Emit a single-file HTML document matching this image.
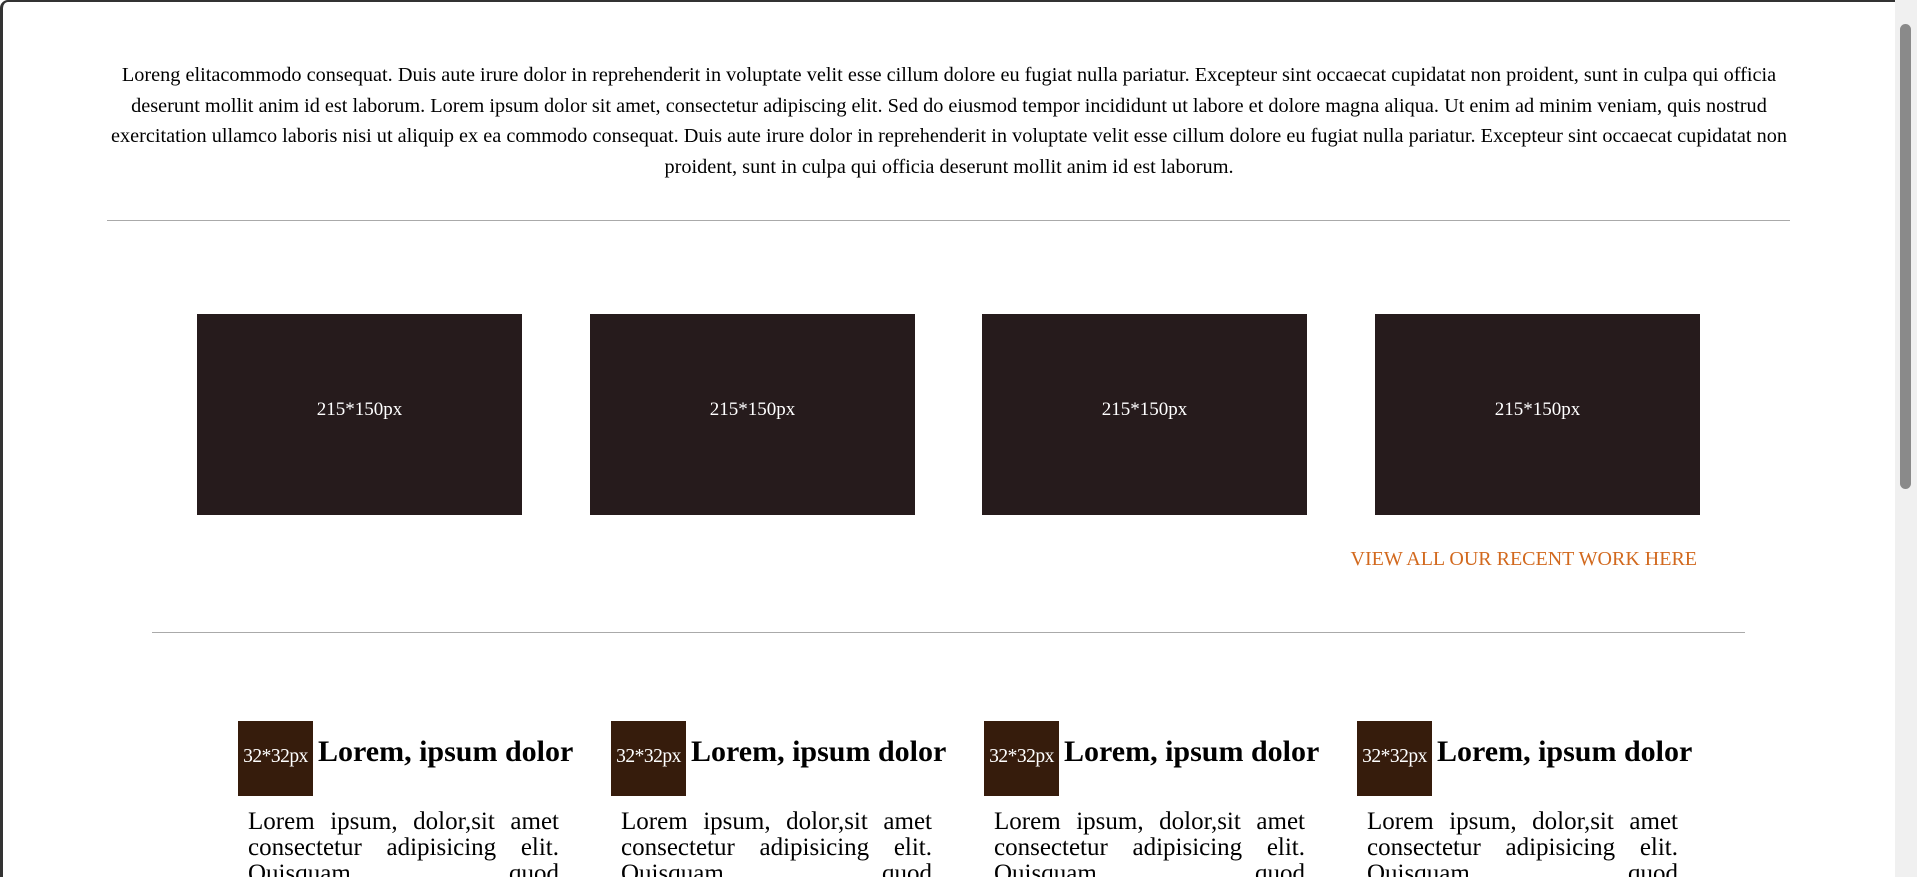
<!DOCTYPE html>
<html><head><style>
html,body{margin:0;padding:0;width:1917px;height:877px;overflow:hidden;}
body{background:#fff;font-family:"Liberation Serif",serif;position:relative;}
.frame{position:absolute;left:0;top:0;width:1917px;height:877px;box-sizing:border-box;border-left:3px solid #333;border-top:2px solid #333;border-radius:8px 0 0 0;}
.p{position:absolute;left:106px;width:1686px;top:60px;text-align:center;font-size:20.3px;line-height:30.5px;color:#000;}
.hr{position:absolute;height:1px;background:#aaa;}
.img{position:absolute;top:314px;width:325px;height:201px;background:#261b1c;color:#fff;font-size:19px;display:flex;align-items:center;justify-content:center;box-sizing:border-box;padding-bottom:10px;}
.link{position:absolute;right:220px;top:548px;color:#d2691e;font-size:20px;}
.col{position:absolute;top:721px;width:360px;height:156px;}
.ic{position:absolute;left:0;top:0;width:75px;height:75px;background:#361c0c;color:#fff;font-size:19.5px;display:flex;align-items:center;justify-content:center;letter-spacing:-0.5px;box-sizing:border-box;padding-bottom:4px;white-space:nowrap;}
.h{position:absolute;left:80px;top:14px;font-size:30px;font-weight:bold;white-space:nowrap;}
.b{position:absolute;left:10px;top:88px;width:311px;font-size:25px;line-height:26px;text-align:justify;}
.sb{position:absolute;right:0;top:0;width:22px;height:877px;background:#f0f0f0;}
.th{position:absolute;left:5px;top:24px;width:11px;height:465px;background:#8a8a8a;border-radius:6px;}
</style></head><body>
<div class="frame"></div>
<div class="p">Loreng elitacommodo consequat. Duis aute irure dolor in reprehenderit in voluptate velit esse cillum dolore eu fugiat nulla pariatur. Excepteur sint occaecat cupidatat non proident, sunt in culpa qui officia deserunt mollit anim id est laborum. Lorem ipsum dolor sit amet, consectetur adipiscing elit. Sed do eiusmod tempor incididunt ut labore et dolore magna aliqua. Ut enim ad minim veniam, quis nostrud exercitation ullamco laboris nisi ut aliquip ex ea commodo consequat. Duis aute irure dolor in reprehenderit in voluptate velit esse cillum dolore eu fugiat nulla pariatur. Excepteur sint occaecat cupidatat non proident, sunt in culpa qui officia deserunt mollit anim id est laborum.</div>
<div class="hr" style="left:107px;width:1683px;top:220px"></div>
<div class="img" style="left:197px">215*150px</div>
<div class="img" style="left:590px">215*150px</div>
<div class="img" style="left:982px">215*150px</div>
<div class="img" style="left:1375px">215*150px</div>
<div class="link">VIEW ALL OUR RECENT WORK HERE</div>
<div class="hr" style="left:152px;width:1593px;top:632px"></div>
<div class="col" style="left:238px"><div class="ic">32*32px</div><div class="h">Lorem, ipsum dolor</div><div class="b">Lorem ipsum, dolor,sit amet consectetur adipisicing elit. Quisquam quod necessitatibusque eveniet.</div></div>
<div class="col" style="left:611px"><div class="ic">32*32px</div><div class="h">Lorem, ipsum dolor</div><div class="b">Lorem ipsum, dolor,sit amet consectetur adipisicing elit. Quisquam quod necessitatibusque eveniet.</div></div>
<div class="col" style="left:984px"><div class="ic">32*32px</div><div class="h">Lorem, ipsum dolor</div><div class="b">Lorem ipsum, dolor,sit amet consectetur adipisicing elit. Quisquam quod necessitatibusque eveniet.</div></div>
<div class="col" style="left:1357px"><div class="ic">32*32px</div><div class="h">Lorem, ipsum dolor</div><div class="b">Lorem ipsum, dolor,sit amet consectetur adipisicing elit. Quisquam quod necessitatibusque eveniet.</div></div>
<div class="sb"><div class="th"></div></div>
</body></html>
